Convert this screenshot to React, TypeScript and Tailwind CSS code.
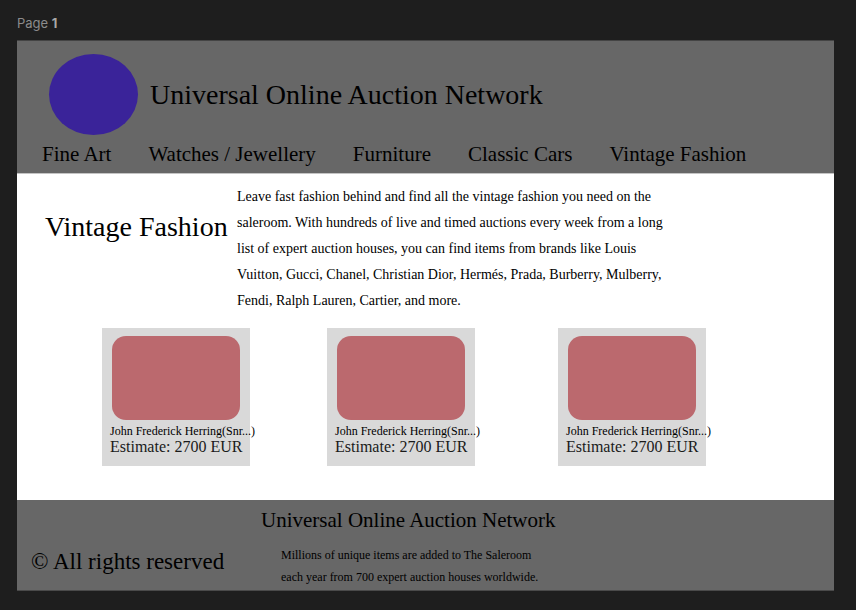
const categories = ['Fine Art', 'Watches / Jewellery', 'Furniture', 'Classic Cars', 'Vintage Fashion'];

const lots = [
  { id: 1, title: 'John Frederick Herring(Snr...)', estimate: 'Estimate: 2700 EUR' },
  { id: 2, title: 'John Frederick Herring(Snr...)', estimate: 'Estimate: 2700 EUR' },
  { id: 3, title: 'John Frederick Herring(Snr...)', estimate: 'Estimate: 2700 EUR' },
];

function Header() {
  return (
    <header className="border-t border-b border-t-[#444444] border-b-[#c4c4c4] bg-[#676767] pt-[13px] pb-[7px]">
      <div className="flex items-center gap-3 pl-8">
        <div className="h-[81px] w-[89px] shrink-0 rounded-[50%] bg-[#3a2399]" />
        <h1 className="text-[28px] leading-8 whitespace-nowrap">Universal Online Auction Network</h1>
      </div>
      <nav className="mt-[7px] flex gap-[37px] pl-[25px] text-[21px] leading-6 whitespace-nowrap">
        {categories.map((name) => (
          <a key={name} href="#">
            {name}
          </a>
        ))}
      </nav>
    </header>
  );
}

function LotCard({ title, estimate }: { title: string; estimate: string }) {
  return (
    <article className="w-[148px] bg-[#d9d9d9] px-2 pt-2 pb-[11px] whitespace-nowrap">
      <div className="mx-[2px] h-[84px] rounded-[14px] bg-[#bb696e]" />
      <h3 className="mt-[3px] text-[12px] leading-4">{title}</h3>
      <p className="text-[16px] leading-4 text-[#1a1a1a]">{estimate}</p>
    </article>
  );
}

function Intro() {
  return (
    <section className="flex items-start gap-[10px] pl-7">
      <h2 className="mt-[27px] w-[182px] shrink-0 text-[28px] leading-8 whitespace-nowrap">Vintage Fashion</h2>
      <p className="text-[14px] leading-[26px] whitespace-nowrap">
        Leave fast fashion behind and find all the vintage fashion you need on the
        <br />
        saleroom. With hundreds of live and timed auctions every week from a long
        <br />
        list of expert auction houses, you can find items from brands like Louis
        <br />
        Vuitton, Gucci, Chanel, Christian Dior, Hermés, Prada, Burberry, Mulberry,
        <br />
        Fendi, Ralph Lauren, Cartier, and more.
      </p>
    </section>
  );
}

function Footer() {
  return (
    <footer className="flex items-start border-b border-[#4a4a4a] bg-[#676767] pt-2 pb-[2px] pl-[14px] whitespace-nowrap">
      <p className="mt-10 w-[230px] shrink-0 text-[23px] leading-7">© All rights reserved</p>
      <div>
        <h2 className="text-[21px] leading-6">Universal Online Auction Network</h2>
        <p className="mt-3 pl-5 text-[12px] leading-[22px]">
          Millions of unique items are added to The Saleroom
          <br />
          each year from 700 expert auction houses worldwide.
        </p>
      </div>
    </footer>
  );
}

export default function App() {
  return (
    <div className="min-h-screen bg-[#1e1e1e] pt-3 pr-[22px] pb-[18px] pl-[17px]">
      <p className="mb-[6px] font-[Inter,sans-serif] text-[13px] leading-[22px] text-[#8c8c8c]">
        Page <span className="font-bold text-[#a8a8a8]">1</span>
      </p>
      <div className="font-['Liberation_Serif',serif] text-black">
        <Header />
        <main className="bg-white pt-[10px] pb-[34px]">
          <Intro />
          <section className="mt-[14px] grid grid-cols-[225px_231px_148px] pl-[85px]">
            {lots.map((lot) => (
              <LotCard key={lot.id} title={lot.title} estimate={lot.estimate} />
            ))}
          </section>
        </main>
        <Footer />
      </div>
    </div>
  );
}
